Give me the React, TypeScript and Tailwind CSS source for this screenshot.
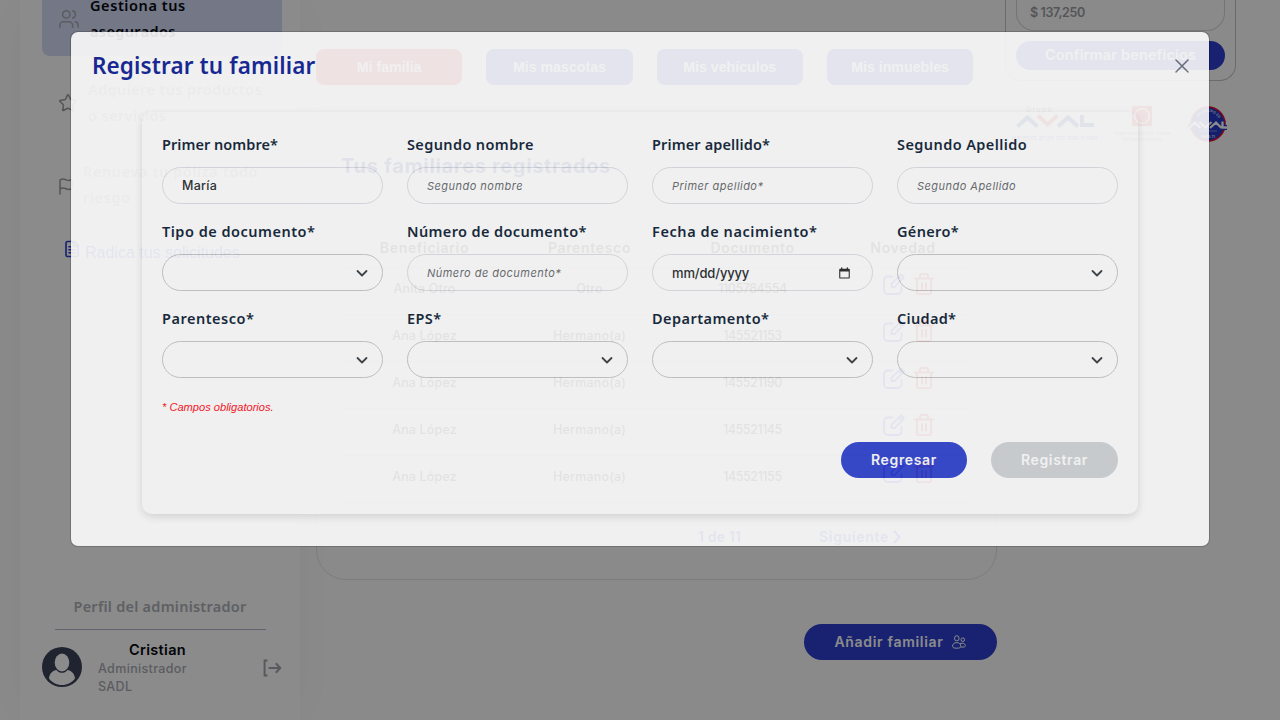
import type { ReactNode } from "react";
import { Users, Star, Flag, FileText } from "lucide-react";

const rows = [
  ["Anita Otro", "Otro", "1105784554"],
  ["Ana López", "Hermano(a)", "145521153"],
  ["Ana López", "Hermano(a)", "145521190"],
  ["Ana López", "Hermano(a)", "145521145"],
  ["Ana López", "Hermano(a)", "145521155"],
];

type Kind = "text" | "select" | "date";
const fields: { label: string; kind: Kind; value?: string; hint?: string; fit: string }[] = [
  { label: "Primer nombre*", kind: "text", value: "María", fit: "tracking-[0.04px]" },
  { label: "Segundo nombre", kind: "text", hint: "Segundo nombre", fit: "tracking-[0.38px]" },
  { label: "Primer apellido*", kind: "text", hint: "Primer apellido*", fit: "tracking-[0.13px]" },
  { label: "Segundo Apellido", kind: "text", hint: "Segundo Apellido", fit: "tracking-[0.42px]" },
  { label: "Tipo de documento*", kind: "select", fit: "tracking-[0.5px]" },
  { label: "Número de documento*", kind: "text", hint: "Número de documento*", fit: "tracking-[0.38px]" },
  { label: "Fecha de nacimiento*", kind: "date", value: "mm/dd/yyyy", fit: "tracking-[0.58px]" },
  { label: "Género*", kind: "select", fit: "tracking-[0.33px]" },
  { label: "Parentesco*", kind: "select", fit: "tracking-[0.5px]" },
  { label: "EPS*", kind: "select", fit: "tracking-[0.4px]" },
  { label: "Departamento*", kind: "select", fit: "tracking-[0.44px]" },
  { label: "Ciudad*", kind: "select", fit: "tracking-[0.3px]" },
];

function EditIcon() {
  return (
    <svg className="h-[22px] w-[22px]" viewBox="0 0 22 22" fill="none" stroke="#3346e8" strokeWidth="1.8" strokeLinecap="round" strokeLinejoin="round">
      <path d="M9.5 3.5H4.5A3.5 3.5 0 0 0 1 7V17.5A3.5 3.5 0 0 0 4.500 21H15a3.500 3.500 0 0 0 3.500-3.500V13" />
      <path d="M8.500 10.800V14h3.200L21 4.300 18.200 1.300zM16 3.600l2.900 2.900" />
    </svg>
  );
}

function TrashIcon() {
  return (
    <svg className="h-[22px] w-[20px]" viewBox="0 0 20 22" fill="none" stroke="#f0202c" strokeWidth="1.900" strokeLinecap="round" strokeLinejoin="round">
      <path d="M1 5.500h18M3 5.500V19.500a1.600 1.600 0 0 0 1.600 1.600H15.400a1.600 1.600 0 0 0 1.600-1.600V5.500M6 5V2.500a1.500 1.500 0 0 1 1.500-1.500h5a1.500 1.500 0 0 1 1.500 1.500V5M8 10v6.500M12 10v6.500" />
    </svg>
  );
}

function Chevron() {
  return (
    <svg className="h-3 w-3" viewBox="0 0 12 12" fill="none" stroke="#343a40" strokeWidth="1.800" strokeLinecap="round" strokeLinejoin="round">
      <path d="M1.500 4 6 8.500 10.500 4" />
    </svg>
  );
}

function CalendarIcon() {
  return (
    <svg className="h-3 w-[11px]" viewBox="0 0 11 12">
      <path d="M2 0.500h1.300v1.200h4.400V.5H9v1.200h.8c.6 0 1 .4 1 1v7.800c0 .6-.4 1-1 1H1.200c-.6 0-1-.4-1-1V2.700c0-.6.4-1 1-1H2zM1.300 4.500v5.900h8.400V4.500z" fill="#222" fillRule="evenodd" />
    </svg>
  );
}

function Field({ label, kind, value, hint, fit }: (typeof fields)[number]) {
  return (
    <div className="h-[87px]">
      <div className={`h-[32px] whitespace-nowrap font-['Noto_Sans',sans-serif] text-[14.5px] leading-[18px] font-semibold text-[#0a1a33] ${fit}`}>{label}</div>
      <div className={`flex h-[37px] items-center justify-between rounded-full border pl-[19px] ${kind === "select" ? "border-[#c6c6c8] pr-[14px]" : "border-[#dcdee5] pr-[22px]"}`}>
        {value && <span className={`pt-[2px] font-medium text-[#212529] ${kind === "date" ? "text-[13px] tracking-[-0.15px]" : "text-[12.5px] tracking-[0.25px]"}`}>{value}</span>}
        {hint && <span className="pt-[2px] text-[11px] italic tracking-[0.47px] text-[#62666a]">{hint}</span>}
        {kind === "select" && <span className="ml-auto"><Chevron /></span>}
        {kind === "date" && <CalendarIcon />}
      </div>
    </div>
  );
}

function Tab({ children, active }: { children: ReactNode; active?: boolean }) {
  return (
    <div className={`flex h-9 w-[146.300px] items-center justify-center rounded-lg pt-[2px] font-['Liberation_Sans',sans-serif] text-[14.200px] font-bold text-white ${active ? "bg-[#f0202c]" : "bg-[#2c3fd0]"}`}>
      {children}
    </div>
  );
}

function Sidebar() {
  const nav = "font-['Noto_Sans',sans-serif] text-[14.5px] font-semibold leading-[26px] whitespace-nowrap";
  return (
    <aside className="ml-5 flex h-[720px] w-[280px] shrink-0 flex-col bg-white shadow-[0_0_50px_rgba(0,0,0,0.045)]">
      <div className="mr-[18px] ml-[22px] flex h-14 rounded-b-lg bg-[#d3daf6] pl-4">
        <Users className="mt-[8px] h-[22px] w-[22px] text-[#a8abb2]" strokeWidth={1.7} />
        <div className={`-mt-[8px] ml-[10px] tracking-[0.58px] text-[#05080f] ${nav}`}>Gestiona tus<br /><span className="tracking-[0.38px]">asegurados</span></div>
      </div>
      <div className="mt-[20px] flex h-[52px] items-center pl-[38px]">
        <Star className="mt-[2px] h-5 w-5 text-[#999ca2]" strokeWidth={1.8} />
        <div className={`ml-[10px] tracking-[0.39px] text-[#a9adb5] ${nav}`}>Adquiere tus productos<br />o servicios</div>
      </div>
      <div className="mt-[30px] flex h-[52px] items-center pl-[37px]">
        <Flag className="mt-1 h-[21px] w-[18px] text-[#999ca2]" strokeWidth={2} />
        <div className={`ml-2 tracking-[0.6px] text-[#a9adb5] ${nav}`}>Renueva tu póliza todo<br />riesgo</div>
      </div>
      <div className="mt-[29px] flex h-[26px] items-center pl-[43px]">
        <FileText className="-mt-[6px] h-5 w-[18px] text-[#2c3fd0]" strokeWidth={2.2} />
        <span className="ml-1 pt-px font-['Liberation_Sans',sans-serif] text-[16px] text-[#3346e8]">Radica tus solicitudes</span>
      </div>
      <div className="mt-[328px] text-center font-['Noto_Sans',sans-serif] text-[14.5px] leading-[26px] font-semibold tracking-[0.24px] text-[#aeb1b8]">Perfil del administrador</div>
      <div className="mt-[10px] mr-[34px] ml-[35px] h-px bg-[#b0b4c8]" />
      <div className="mr-[18px] ml-[22px] flex items-center pt-[9px]">
        <svg className="-mt-px h-10 w-10" viewBox="0 0 40 40">
          <circle cx="20" cy="20" r="20" fill="#394258" />
          <ellipse cx="20" cy="15.500" rx="7.300" ry="9" fill="#fff" />
          <path d="M7 31.500C7.500 26 11 23.500 14.500 23c1.500 2 3.500 2.800 5.500 2.800s4-.8 5.500-2.800C29 23.500 32.500 26 33 31.500 30 35.500 25.500 38 20 38S10 35.500 7 31.500z" fill="#fff" />
        </svg>
        <div className="ml-4 w-[119px] pt-px text-[12.500px] leading-[18px] font-medium tracking-[0.350px] text-[#a7aab2]">
          <div className="text-center text-[14.500px] leading-[20px] font-semibold tracking-[0.320px] text-[#05080f]">Cristian</div>
          Administrador<br />SADL
        </div>
        <svg className="ml-auto h-[18px] w-[19px]" viewBox="0 0 19 18" fill="none" stroke="#a0a3ad" strokeWidth="2">
          <path d="M4.500 1.400H1.600v15.200h2.900M5.500 9h12M12.800 4.300 17.300 9l-4.500 4.700" />
        </svg>
      </div>
    </aside>
  );
}

function AvalMark({ c, v, className }: { c: string; v: string; className: string }) {
  return (
    <svg className={className} viewBox="0 0 78 14" fill="none" strokeWidth="4">
      <path d="M1.500 12.500 11.500 3.500l10 9M42 12.500l10-9 10 9M66 1v10h12" stroke={c} />
      <path d="M22 1.500 31.800 10.500 41.500 1.500" stroke={v} />
    </svg>
  );
}

function Page() {
  const cols = "grid grid-cols-[167px_163px_163px_138px] items-center justify-items-center";
  return (
    <div className="flex h-[720px] bg-[#fefefe]">
      <Sidebar />
      <main className="ml-4 w-[681px] shrink-0 pt-[49px]">
        <div className="flex gap-6">
          <Tab active>Mi familia</Tab>
          <Tab>Mis mascotas</Tab>
          <Tab>Mis vehículos</Tab>
          <Tab>Mis inmuebles</Tab>
        </div>
        <section className="mt-[45px] h-[450px] rounded-[30px] border border-[#e3e3e3] px-[24px] pt-[21px]">
          <h2 className="text-[20px] leading-[28px] font-bold tracking-[0.660px] whitespace-nowrap text-[#0a1a95]">Tus familiares registrados</h2>
          <div className={`mt-[47px] h-[41px] border-b border-[#dcdcdc] pt-px text-[14px] font-semibold tracking-[0.670px] text-[#222] ${cols}`}>
            <span>Beneficiario</span><span>Parentesco</span><span>Documento</span><span>Novedad</span>
          </div>
          {rows.map((r) => (
            <div key={r[2]} className={`h-[47px] border-b border-[#dcdcdc] pb-[4px] text-[12.500px] font-medium text-[#222] ${cols}`}>
              <span className="tracking-[0.150px]">{r[0]}</span>
              <span className="tracking-[0.180px]">{r[1]}</span>
              <span className="tracking-[-0.450px]">{r[2]}</span>
              <span className="-mt-[10px] flex gap-[9px] pl-[11px]"><EditIcon /><TrashIcon /></span>
            </div>
          ))}
          <div className="mt-[21px] flex h-6 items-center pl-[357px] text-[14px] font-semibold text-[#3346e8]">
            <span className="w-[121px] tracking-[0.170px]">1 de 11</span>
            <span className="tracking-[0.700px]">Siguiente</span>
            <svg className="mt-[2px] ml-1 h-[14px] w-2" viewBox="0 0 8 14" fill="none" stroke="#3346e8" strokeWidth="2.200"><path d="M1 1l5.500 6L1 13" /></svg>
          </div>
        </section>
        <div className="mt-11 ml-auto flex h-9 w-[193px] items-center justify-center gap-2 rounded-full bg-[#2c3fd0] pr-px pb-px text-[14px] font-semibold tracking-[0.690px] whitespace-nowrap text-white">
          Añadir familiar
          <svg className="mt-px h-[14px] w-[14px]" viewBox="0 0 14 14" fill="none" stroke="#fff" strokeWidth="1">
            <ellipse cx="4.800" cy="3.300" rx="2.300" ry="2.600" />
            <circle cx="10.800" cy="4.700" r="1.800" />
            <path d="M.6 11.300c0-2.100 1.500-3.700 4.100-3.700s4.100 1.600 4.100 3.700c0 1.400-1.400 1.900-4.100 1.900S.6 12.700.6 11.300zM8 8.600c2.800-1.200 5.400.2 5.400 2 0 1.200-1.300 1.700-4.500 1.500" />
          </svg>
        </div>
      </main>
      <div className="ml-2 w-[231px] shrink-0">
        <div className="h-[81px] rounded-b-2xl border border-t-0 border-[#c4c4c4] px-[10px]">
          <div className="flex h-[31px] items-center rounded-b-[18px] border border-t-0 border-[#d5d5d5] pb-[3px] pl-[13px] text-[12.500px] font-semibold tracking-[-0.350px] text-[#9a9da3]">$ 137,250</div>
          <div className="mt-[10px] flex h-[29px] items-center justify-center rounded-full bg-[#2c3fd0] pb-px text-[14.500px] font-semibold tracking-[0.140px] text-white">Confirmar beneficios</div>
        </div>
        <div className="mt-[24px] flex h-[37px] items-center pl-[11px] text-[#6a6a6a]">
          <div className="w-[82px]">
            <div className="pl-[10px] text-[7px] leading-[8px] tracking-[1.300px] text-[#334]">Grupo</div>
            <AvalMark c="#1c2f9c" v="#f0202c" className="h-[14px] w-[78px]" />
            <div className="-ml-1 pt-[6px] text-[5.600px] leading-[8px] whitespace-nowrap text-[#3346b8]">Hacemos grupo con todo el país</div>
          </div>
          <div className="ml-[15px] w-[58px] text-center text-[4.800px] leading-[6px] whitespace-nowrap">
            <svg className="mx-auto mb-1 h-5 w-5" viewBox="0 0 20 20"><rect width="20" height="20" fill="#f0202c" /><circle cx="10" cy="10" r="7.300" fill="none" stroke="#fff" strokeWidth="1.300" /></svg>
            Organización Luis Carlos<br />Sarmiento Angulo
          </div>
          <svg className="ml-[17px] h-9 w-[39px]" viewBox="0 0 39 36">
            <circle cx="20" cy="18" r="17" fill="#2437c8" stroke="#e0102c" strokeWidth="1.600" />
            <path d="M1 22 7 16.500l6 5.500M12 16l6 5.500 6-5.500M22 22l6-5.500 6 5.500M34 14.500v7h5" fill="none" strokeWidth="5" stroke="#2437c8" />
            <path d="M1 22 7 16.500l5.500 5.500M11.500 16l6 5.500 6-5.500M22 22l6-5.500 5.500 5.500M34.500 15.500v6H39" fill="none" strokeWidth="2.300" stroke="#fff" />
            <path id="arcTop" d="M9 14a11.500 11.500 0 0 1 22 0" fill="none" />
            <path d="M11 25h18" stroke="#fff" strokeWidth=".6" opacity=".7" />
            <text fontSize="3.600" fontWeight="700" fill="#fff" opacity=".8"><textPath href="#arcTop" startOffset="10%">UN GRUPO ES</textPath></text>
            <text x="20" y="32" fontSize="3.600" fontWeight="700" fill="#fff" opacity=".8" textAnchor="middle">PARA TI</text>
          </svg>
        </div>
      </div>
    </div>
  );
}

export default function App() {
  return (
    <div className="relative h-[720px] w-[1280px] overflow-hidden font-['Inter',sans-serif]">
      <Page />
      <div className="absolute inset-0 bg-black/[0.455]" />
      <div className="absolute top-[31px] left-[70px] h-[516px] w-[1140px] rounded-lg border border-black/20 bg-white bg-clip-padding opacity-[0.88]">
        <div className="flex h-[80px] items-start justify-between pt-[18px] pr-5 pl-[21px]">
          <h1 className="pt-px font-['Noto_Sans',sans-serif] text-[22.500px] leading-[30px] font-semibold tracking-[0.120px] whitespace-nowrap text-[#0a1a95]">Registrar tu familiar</h1>
          <svg className="mt-[9px] h-[14px] w-[14px]" viewBox="0 0 14 14" fill="none" stroke="#70747c" strokeWidth="1.500" strokeLinecap="round">
            <path d="M1 1l12 12M13 1 1 13" />
          </svg>
        </div>
        <div className="mx-[71px] h-[402px] rounded-[10px] px-5 pt-[23px] shadow-[0_3px_8px_rgba(0,0,0,0.14)]">
          <div className="grid grid-cols-4 gap-x-6">
            {fields.map((f) => <Field key={f.label} {...f} />)}
          </div>
          <p className="mt-[3px] font-['Liberation_Sans',sans-serif] text-[11.100px] leading-[16px] text-[#ff0513] italic">* Campos obligatorios.</p>
          <div className="mt-[27px] flex justify-end gap-6 text-[14px] font-semibold tracking-[0.650px] text-white">
            <div className="flex h-9 w-[126px] items-center justify-center rounded-full bg-[#2c3fd0] pb-px">Regresar</div>
            <div className="flex h-9 w-[127px] items-center justify-center rounded-full bg-[#cfd3d6] pb-px">Registrar</div>
          </div>
        </div>
      </div>
    </div>
  );
}
